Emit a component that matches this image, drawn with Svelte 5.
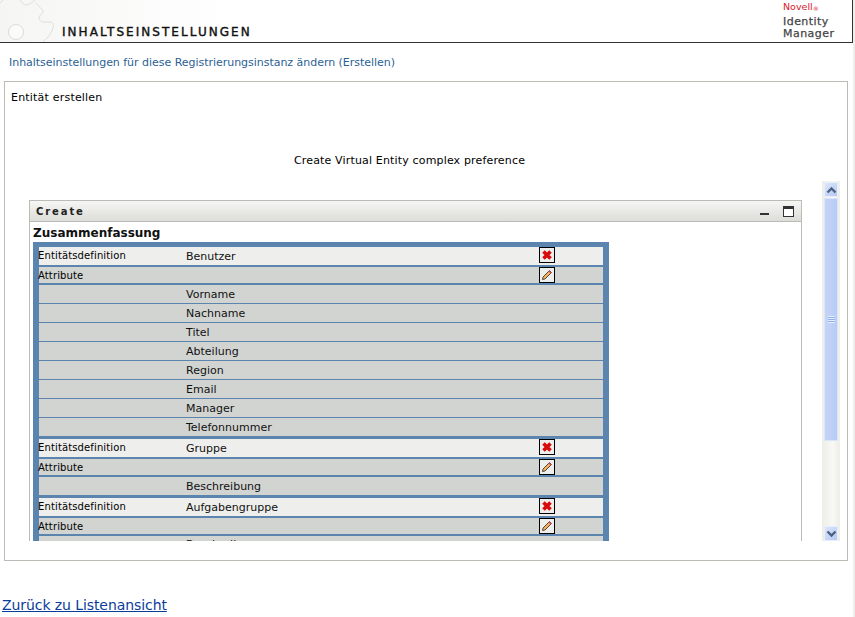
<script>
  const rows = [
    { k: 'head', a: 'Entitätsdefinition', b: 'Benutzer', icon: 'x' },
    { k: 'attr', a: 'Attribute', b: '', icon: 'pen' },
    { k: 'val', b: 'Vorname' },
    { k: 'val', b: 'Nachname' },
    { k: 'val', b: 'Titel' },
    { k: 'val', b: 'Abteilung' },
    { k: 'val', b: 'Region' },
    { k: 'val', b: 'Email' },
    { k: 'val', b: 'Manager' },
    { k: 'val', b: 'Telefonnummer', last: true },
    { k: 'head', a: 'Entitätsdefinition', b: 'Gruppe', icon: 'x' },
    { k: 'attr', a: 'Attribute', b: '', icon: 'pen' },
    { k: 'val', b: 'Beschreibung', last: true },
    { k: 'head', a: 'Entitätsdefinition', b: 'Aufgabengruppe', icon: 'x' },
    { k: 'attr', a: 'Attribute', b: '', icon: 'pen' },
    { k: 'val', b: 'Beschreibung', up: true }
  ];
</script>

<div class="page">
  <header class="top">
    <svg class="gear" width="230" height="42" viewBox="0 0 230 42">
      <defs>
        <linearGradient id="fade" x1="0" x2="1" y1="0" y2="0">
          <stop offset="0" stop-color="#f5f5f4"/>
          <stop offset="1" stop-color="#ffffff"/>
        </linearGradient>
      </defs>
      <rect x="0" y="0" width="230" height="42" fill="url(#fade)"/>
      <path d="M0 3 L3 0 M20 0 C22 3 24 5 26 5 C28 5 32 3 35 0 M36 3 C38 6 43 9 43 12 C43 14 39 15 39 17 C39 20 41 22 43 22 L51 22 C53 22 54 26 53 28 C52 32 49 35 48 37 C47 39 44 40 43 42" fill="none" stroke="#dededa" stroke-width="1"/>
      <circle cx="16" cy="32" r="7.5" fill="#fbfbfb" stroke="#dcdcd8" stroke-width="1"/>
    </svg>
    <h1>INHALTSEINSTELLUNGEN</h1>
    <div class="brand">
      <div class="novell">Novell<sup>®</sup></div>
      <div class="idm">Identity</div>
      <div class="idm">Manager</div>
    </div>
  </header>

  <p class="sub">Inhaltseinstellungen für diese Registrierungsinstanz ändern (Erstellen)</p>

  <section class="box">
    <div class="boxtitle">Entität erstellen</div>
    <div class="caption">Create Virtual Entity complex preference</div>
    <div class="scrollarea">
      <div class="viewport">
        <div class="panel">
          <div class="bar">
            <span class="bartitle">Create</span>
            <span class="barbtns">
              <svg width="10" height="10" viewBox="0 0 10 10"><rect x="0" y="7" width="9" height="2" fill="#333"/></svg>
              <svg width="11" height="11" viewBox="0 0 11 11"><rect x=".5" y=".5" width="10" height="10" fill="#fff" stroke="#333"/><rect x="0" y="0" width="11" height="3" fill="#333"/></svg>
            </span>
          </div>
          <h2>Zusammenfassung</h2>
          <div class="table">
            {#each rows as r}
              <div class="row {r.k}" class:last={r.last} class:up={r.up}>
                <span class="a">{r.a ?? ''}</span>
                <span class="b">{r.b}</span>
                {#if r.icon}
                  <span class="ic">
                    {#if r.icon === 'x'}
                      <svg width="12" height="12" viewBox="0 0 12 12"><path d="M2.5 2.5 L9.5 9.5 M9.5 2.5 L2.5 9.5" stroke="#d80a0a" stroke-width="3.6"/></svg>
                    {:else}
                      <svg width="12" height="12" viewBox="0 0 12 12"><path d="M8.5 1.5 L10.5 3.5 L4 10 L1.5 10.5 L2 8 Z" fill="#f0b060" stroke="#4a3a2a" stroke-width=".9"/><path d="M8.5 1.5 L10.5 3.5 L9.5 4.5 L7.5 2.5 Z" fill="#d0507a"/></svg>
                    {/if}
                  </span>
                {/if}
              </div>
            {/each}
          </div>
        </div>
      </div>
      <div class="sb">
        <div class="sbbtn"><svg width="11" height="8" viewBox="0 0 11 8"><path d="M1.5 6.5 L5.5 2.5 L9.5 6.5" fill="none" stroke="#4d6185" stroke-width="2.4"/></svg></div>
        <div class="thumb"><span class="grip"></span></div>
        <div class="track"></div>
        <div class="sbbtn"><svg width="11" height="8" viewBox="0 0 11 8"><path d="M1.5 1.5 L5.5 5.5 L9.5 1.5" fill="none" stroke="#4d6185" stroke-width="2.4"/></svg></div>
      </div>
    </div>
  </section>

  <a class="back" href="#top">Zurück zu Listenansicht</a>
  <div class="edge"></div>
</div>

<style>
  :global(body) { margin: 0; background: #fff; }
  .page {
    position: relative;
    width: 855px;
    height: 617px;
    overflow: hidden;
    font-family: "DejaVu Sans", Verdana, sans-serif;
    font-size: 11px;
    color: #000;
  }
  .edge { position: absolute; top: 0; right: 0; bottom: 0; width: 2px; background: #eeeeea; }
  .top {
    position: relative;
    box-sizing: border-box;
    width: 853px;
    height: 43px;
    border-bottom: 1px solid #333;
    border-right: 1px solid #333;
  }
  .gear { position: absolute; left: 0; top: 0; }
  h1 {
    position: absolute;
    left: 62px;
    top: 24px;
    margin: 0;
    font-size: 12px;
    font-weight: normal;
    line-height: 16px;
    letter-spacing: 2.05px;
    color: #111;
    -webkit-text-stroke: .4px #111;
  }
  .brand {
    position: absolute;
    left: 783px;
    top: 1px;
    line-height: 12.5px;
    color: #444;
  }
  .idm { font-size: 11px; letter-spacing: .45px; -webkit-text-stroke: .25px #444; position: relative; top: 2px; }
  .novell { color: #d9202c; font-size: 9.5px; letter-spacing: 0; }
  .novell sup { font-size: 6px; line-height: 0; vertical-align: -1px; }
  .sub {
    margin: 0;
    padding: 13px 0 0 9px;
    height: 25px;
    line-height: 14px;
    color: #2b5f95;
    letter-spacing: -.03px;
  }
  .box {
    box-sizing: border-box;
    width: 844px;
    height: 480px;
    margin-left: 4px;
    border: 1px solid #bcbcb6;
    position: relative;
  }
  .boxtitle { padding: 9px 0 0 6px; line-height: 14px; height: 21px; letter-spacing: .2px; }
  .caption { text-align: center; padding-top: 42px; height: 23px; line-height: 14px; margin-left: -33px; letter-spacing: .16px; }
  .scrollarea { display: flex; margin-top: 4px; padding-left: 24px; height: 360px; }
  .viewport { width: 773px; height: 360px; overflow: hidden; padding-top: 19px; box-sizing: border-box; }
  .panel { box-sizing: border-box; border: 1px solid #bcbcb6; width: 773px; height: 600px; }
  .bar {
    display: flex;
    justify-content: space-between;
    align-items: center;
    height: 20px;
    background: linear-gradient(#f6f6f4, #dcdcd8);
    border-bottom: 1px solid #bcbcb6;
  }
  .bartitle { padding-left: 6px; font-weight: bold; font-size: 10px; letter-spacing: 1.9px; color: #222; }
  .barbtns { display: flex; gap: 13px; padding-right: 7px; align-items: center; }
  h2 {
    margin: 0;
    padding-left: 3px;
    font-size: 12px;
    line-height: 23px;
    height: 20px;
    color: #111;
  }
  .table {
    box-sizing: border-box;
    width: 576px;
    margin-left: 3px;
    background: #5b85ae;
    padding: 5px 6px 0;
  }
  .row {
    display: flex;
    align-items: center;
    position: relative;
    box-sizing: border-box;
    background: #d2d4d1;
    color: #111;
  }
  .row.head { background: #eeeeec; height: 18px; margin-bottom: 2px; }
  .row.attr { height: 16px; margin-bottom: 2px; }
  .row.val { height: 18px; margin-bottom: 1px; }
  .row.val.last { margin-bottom: 3px; }
  .row.up { align-items: flex-start; }
  .row.up .b { padding-top: 2px; }
  .a { width: 148px; margin-left: -1px; flex: none; font-size: 10px; letter-spacing: .13px; padding-bottom: 1px; color: #000; }
  .row.attr .a { padding-bottom: 0; padding-top: 1px; }
  .b { padding-top: 1px; }
  .ic {
    position: absolute;
    left: 500px;
    top: 0;
    box-sizing: border-box;
    width: 16px;
    height: 16px;
    border: 1px solid #000;
    display: flex;
    align-items: center;
    justify-content: center;
    background: #eeeeec;
  }
  .sb {
    display: flex;
    flex-direction: column;
    box-sizing: border-box;
    width: 18px;
    margin-left: 20px;
    padding-top: 1px;
    background: linear-gradient(90deg, #eeeee8, #f8f8f4 60%, #eeeee8);
  }
  .sbbtn {
    box-sizing: border-box;
    height: 15px;
    margin: 0 2px;
    background: linear-gradient(135deg, #dbe6fb, #b6c9f3);
    border: 1px solid #e8eefb;
    display: flex;
    align-items: center;
    justify-content: center;
  }
  .thumb {
    box-sizing: border-box;
    height: 243px;
    margin: 1px 2px 0;
    background: linear-gradient(90deg, #c5d4f8, #b9cbf6);
    border: 1px solid #dce6fb;
    display: flex;
    align-items: center;
    justify-content: center;
  }
  .grip {
    width: 7px;
    height: 7px;
    background: repeating-linear-gradient(#e6eeff 0 1px, #8fb0ee 1px 2px);
  }
  .track { flex: 1; }
  .back {
    display: block;
    margin: 36px 0 0 2px;
    font-size: 14px;
    line-height: 17px;
    color: #0a3c9c;
    text-decoration: underline;
    letter-spacing: -.08px;
  }
</style>
